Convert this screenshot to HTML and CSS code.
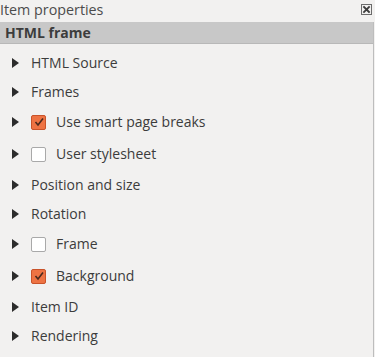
FILE: index.html
```html
<!DOCTYPE html>
<html>
<head>
<meta charset="utf-8">
<link rel="stylesheet" href="styles.css">
</head>
<body>
<div class="dock">
  <div class="titlebar">
    <span class="title">Item properties</span>
    <svg class="close" width="11" height="11" viewBox="0 0 11 11">
      <rect x="0.5" y="0.5" width="10" height="10" fill="none" stroke="#6b6b6b" stroke-width="1"/>
      <path d="M3 3 L8 8 M8 3 L3 8" stroke="#3c3c3c" stroke-width="1.8" stroke-linecap="square"/>
    </svg>
  </div>
  <div class="panel">
    <div class="header">HTML frame</div>
    <div class="list">
      <div class="row"><span class="arrow"></span><span class="label">HTML Source</span></div>
      <div class="row"><span class="arrow"></span><span class="label">Frames</span></div>
      <div class="row cbrow"><span class="arrow"></span><span class="cb checked"><svg width="14" height="14" viewBox="0 0 14 14"><path d="M3.5 7 L6 10 L11 3.5" fill="none" stroke="#4a2a1e" stroke-width="1.6"/></svg></span><span class="label">Use smart page breaks</span></div>
      <div class="row cbrow"><span class="arrow"></span><span class="cb"></span><span class="label">User stylesheet</span></div>
      <div class="row"><span class="arrow"></span><span class="label">Position and size</span></div>
      <div class="row"><span class="arrow"></span><span class="label">Rotation</span></div>
      <div class="row cbrow"><span class="arrow"></span><span class="cb"></span><span class="label">Frame</span></div>
      <div class="row cbrow"><span class="arrow"></span><span class="cb checked"><svg width="14" height="14" viewBox="0 0 14 14"><path d="M3.5 7 L6 10 L11 3.5" fill="none" stroke="#4a2a1e" stroke-width="1.6"/></svg></span><span class="label">Background</span></div>
      <div class="row"><span class="arrow"></span><span class="label">Item ID</span></div>
      <div class="row"><span class="arrow"></span><span class="label">Rendering</span></div>
    </div>
  </div>
</div>
</body>
</html>
```

FILE: styles.css
```css
html, body {
  margin: 0;
  padding: 0;
  background: #f2f1f0;
}
body {
  width: 375px;
  height: 357px;
  overflow: hidden;
  font-family: "Open Sans", "DejaVu Sans", sans-serif;
  color: #3c3c3c;
}
.titlebar {
  height: 22px;
  display: flex;
  align-items: center;
  justify-content: space-between;
  padding-right: 3px;
}
.title {
  font-size: 14.3px;
  color: #4c4c4c;
  line-height: 18px;
  margin-top: -2px;
}
.close {
  display: block;
  margin-top: -4px;
}
.panel {
  width: 373px;
  border-right: 1px solid #bdbdbd;
  height: 335px;
}
.header {
  height: 21px;
  background: #c8c8c8;
  border-bottom: 1px solid #b8b8b8;
  font-weight: bold;
  font-size: 14px;
  line-height: 21px;
  padding-left: 5px;
  color: #3c3c3c;
}
.list {
  padding-top: 4px;
}
.row {
  height: 29px;
  display: flex;
  align-items: center;
  font-size: 14px;
}
.cbrow {
  height: 32px;
}
.arrow {
  width: 0;
  height: 0;
  border-top: 5px solid transparent;
  border-bottom: 5px solid transparent;
  border-left: 7px solid #2c2c2c;
  margin-left: 12px;
  margin-right: 12px;
}
.cb {
  width: 13px;
  height: 13px;
  border: 1px solid #a9a9a9;
  border-radius: 2px;
  background: #ffffff;
  margin-right: 10px;
  display: flex;
  align-items: center;
  justify-content: center;
  position: relative;
}
.cb.checked {
  background: #ee7343;
  border-color: #c9532a;
}
.cb svg {
  position: absolute;
  left: -0.5px;
  top: -0.5px;
}
.label {
  line-height: 18px;
}
```
